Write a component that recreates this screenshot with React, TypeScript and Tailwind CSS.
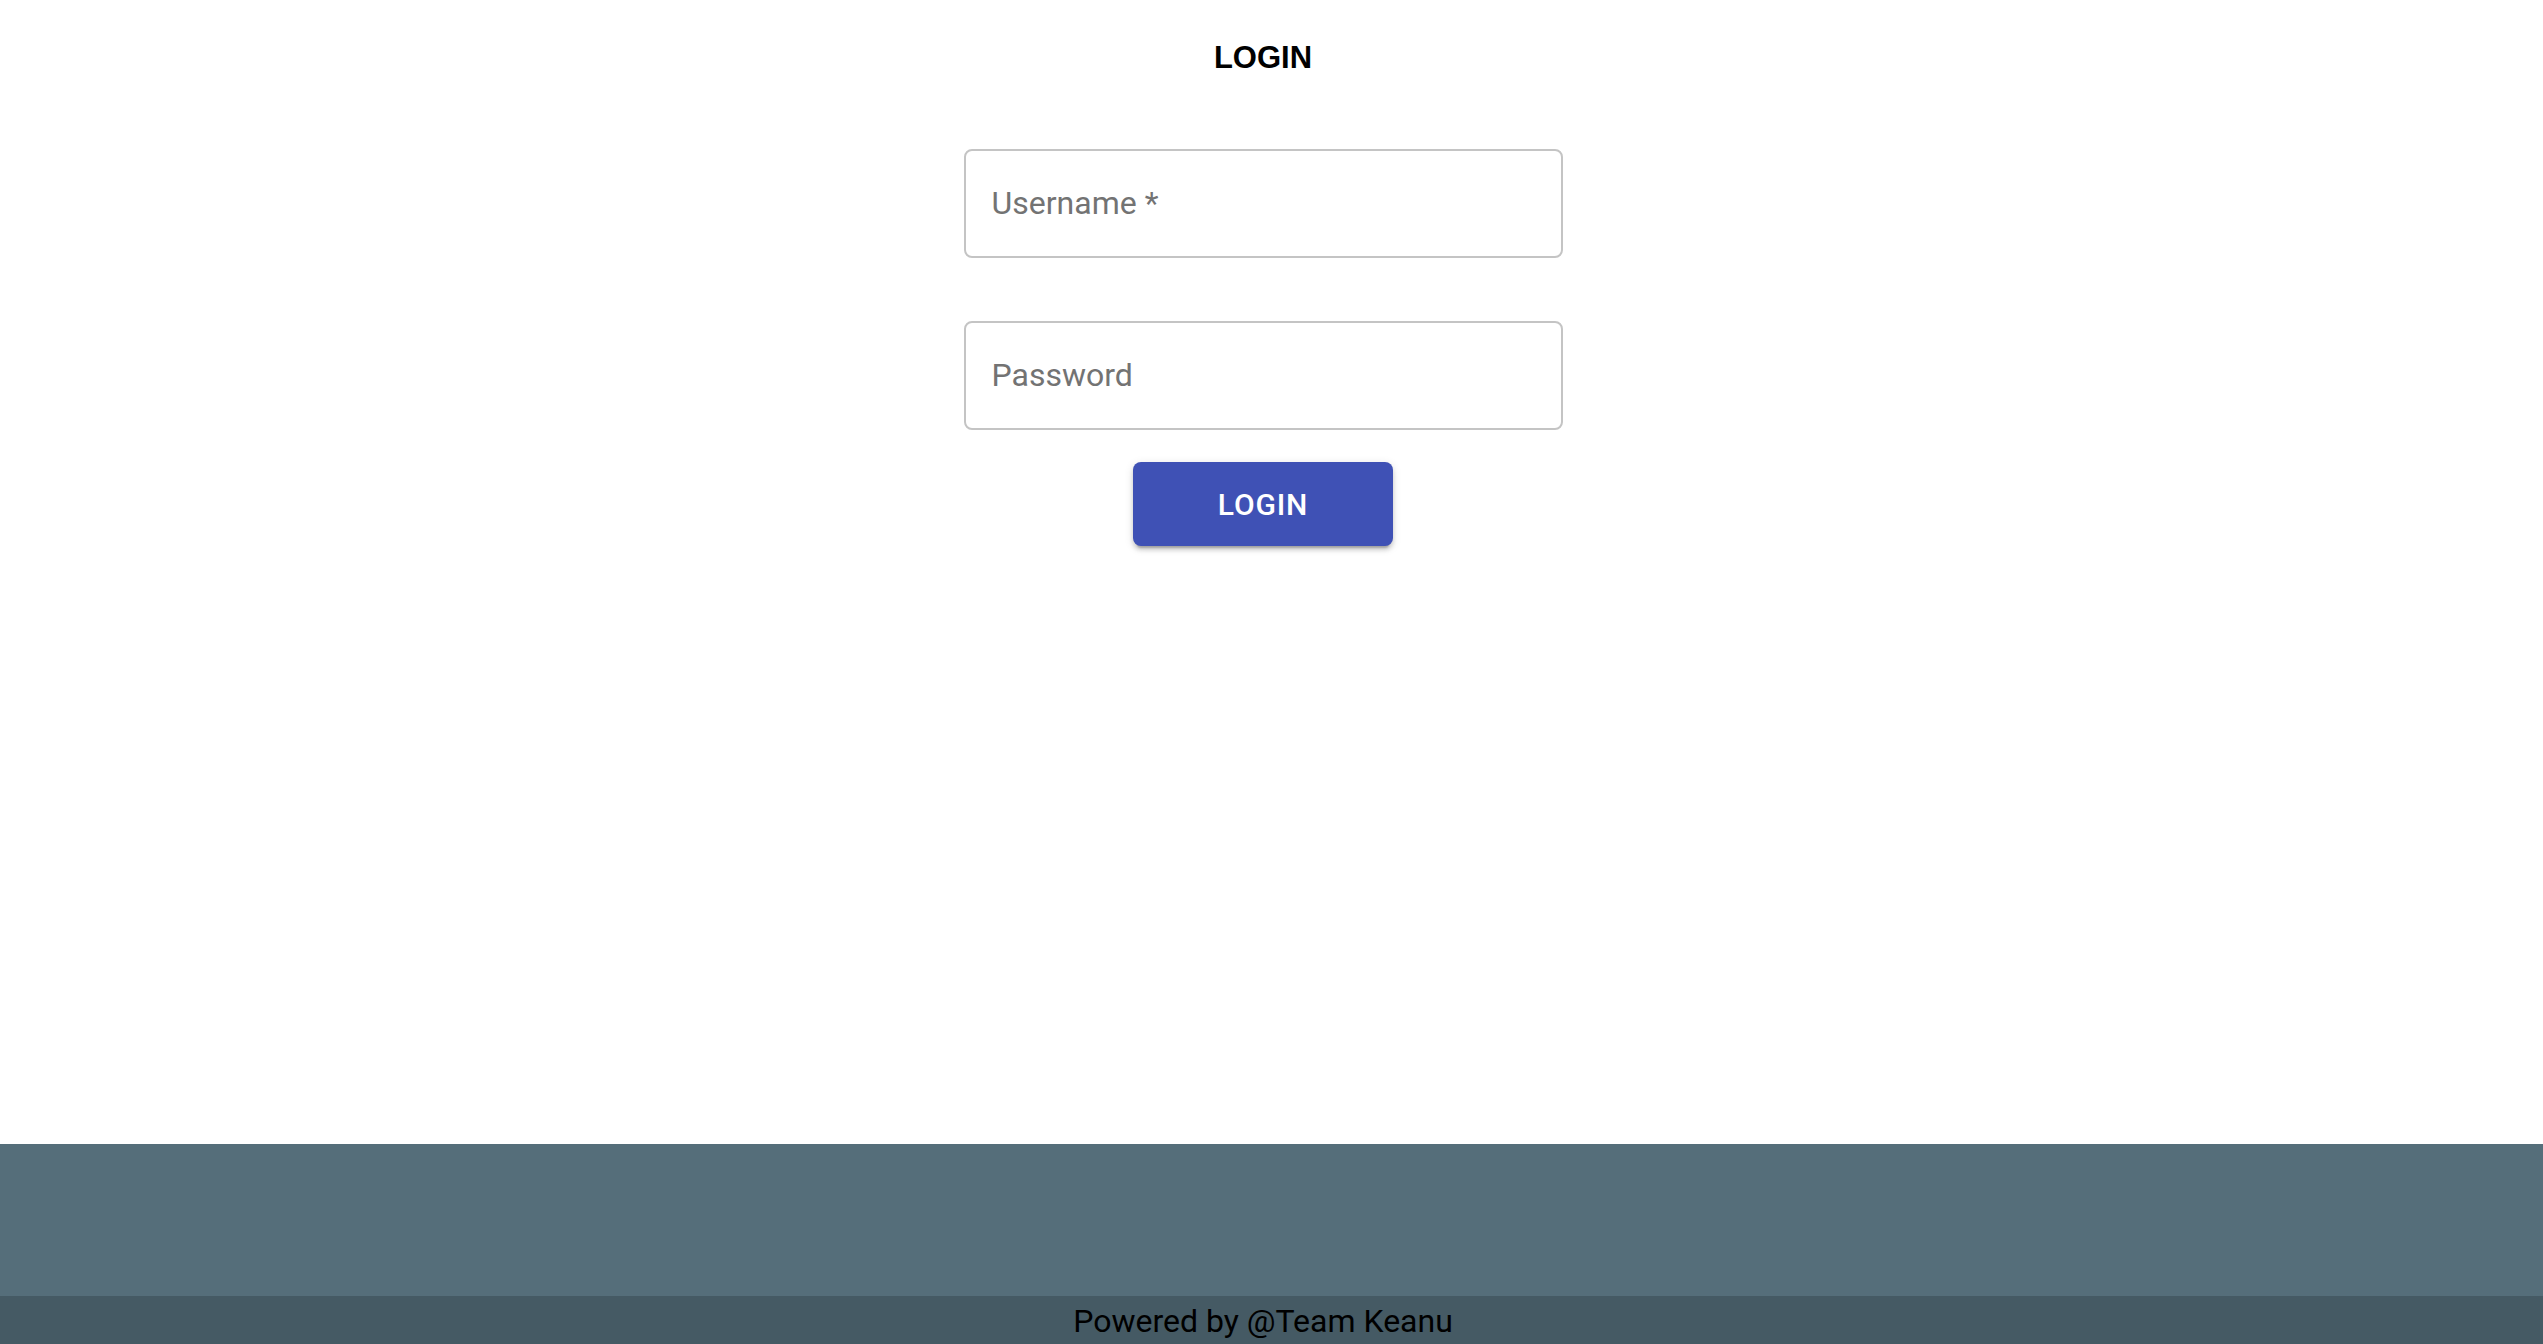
import React from "react";

export default function App() {
  return (
    <div className="min-h-screen flex flex-col bg-white" style={{ fontFamily: "Roboto, 'Liberation Sans', sans-serif" }}>
      <main className="flex-1 flex flex-col items-center pr-[17px]">
        <h1 className="pt-[39px] text-[31px] leading-[37px] font-bold text-black" style={{ fontFamily: "'Liberation Sans', Arial, sans-serif" }}>
          LOGIN
        </h1>
        <div className="mt-[73px] w-[599px] h-[109px] border-2 border-[#c4c4c4] rounded-[8px] flex items-center pl-[26px] pb-[2px]">
          <span className="text-[32px] text-[#737373]">Username *</span>
        </div>
        <div className="mt-[63px] w-[599px] h-[109px] border-2 border-[#c4c4c4] rounded-[8px] flex items-center pl-[26px] pb-[2px]">
          <span className="text-[32px] text-[#737373]">Password</span>
        </div>
        <button className="mt-[32px] w-[260px] h-[84px] rounded-[8px] bg-[#3f51b5] text-white text-[30px] font-medium tracking-[0.86px] flex items-center justify-center shadow-[0_6px_2px_-4px_rgba(0,0,0,0.2),0_4px_4px_0_rgba(0,0,0,0.14),0_2px_10px_0_rgba(0,0,0,0.12)]">
          LOGIN
        </button>
      </main>
      <footer className="flex flex-col">
        <div className="h-[152px] bg-[#556e7a]" />
        <div className="h-[48px] bg-[#455a64] flex items-center justify-center pr-[17px] pt-[2px]">
          <span className="text-[32px] leading-[46px] text-black">Powered by @Team Keanu</span>
        </div>
      </footer>
    </div>
  );
}
